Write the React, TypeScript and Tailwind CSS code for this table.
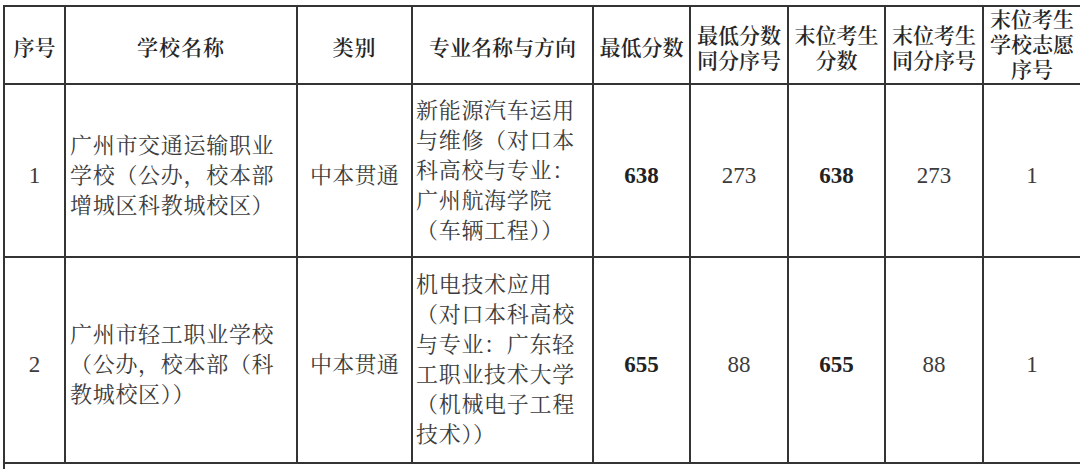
import React from "react";

const cellB = "border-2 border-[#343434]";

function Lines({ lines, className = "" }: { lines: string[]; className?: string }) {
  return (
    <div className={className}>
      {lines.map((l, i) => (
        <div key={i} className="whitespace-nowrap">
          {l}
        </div>
      ))}
    </div>
  );
}

type Row = {
  no: string;
  school: string[];
  kind: string;
  major: string[];
  minScore: string;
  minRank: string;
  lastScore: string;
  lastRank: string;
  wish: string;
  h: string;
};

const rows: Row[] = [
  {
    no: "1",
    school: ["广州市交通运输职业", "学校（公办，校本部", "增城区科教城校区）"],
    kind: "中本贯通",
    major: ["新能源汽车运用", "与维修（对口本", "科高校与专业：", "广州航海学院", "（车辆工程））"],
    minScore: "638",
    minRank: "273",
    lastScore: "638",
    lastRank: "273",
    wish: "1",
    h: "h-[173px]",
  },
  {
    no: "2",
    school: ["广州市轻工职业学校", "（公办，校本部（科", "教城校区））"],
    kind: "中本贯通",
    major: ["机电技术应用", "（对口本科高校", "与专业：广东轻", "工职业技术大学", "（机械电子工程", "技术））"],
    minScore: "655",
    minRank: "88",
    lastScore: "655",
    lastRank: "88",
    wish: "1",
    h: "h-[206px]",
  },
];

export default function App() {
  return (
    <div className="w-[1080px] h-[469px] overflow-hidden bg-white font-['Liberation_Serif','Noto_Serif_CJK_SC','Noto_Sans_CJK_SC',serif]">
      <table className="ml-[3px] mt-[5px] w-[1077px] table-fixed border-collapse">
        <colgroup>
          <col className="w-[61px]" />
          <col className="w-[232px]" />
          <col className="w-[115px]" />
          <col className="w-[181px]" />
          <col className="w-[97px]" />
          <col className="w-[98px]" />
          <col className="w-[97px]" />
          <col className="w-[98px]" />
          <col className="w-[98px]" />
        </colgroup>
        <thead>
          <tr className="h-[78px] text-[21px] leading-[25px] text-[#262626]">
            <th className={`${cellB} p-0 pt-[6px] text-center align-middle font-semibold`}>序号</th>
            <th className={`${cellB} p-0 pt-[6px] text-center align-middle font-semibold tracking-[1px]`}>学校名称</th>
            <th className={`${cellB} p-0 pt-[6px] text-center align-middle font-semibold tracking-[1px]`}>类别</th>
            <th className={`${cellB} p-0 pt-[6px] text-center align-middle font-semibold`}>专业名称与方向</th>
            <th className={`${cellB} p-0 pt-[6px] text-center align-middle font-semibold`}>最低分数</th>
            <th className={`${cellB} p-0 pt-[8px] text-center align-middle font-semibold`}>
              <Lines lines={["最低分数", "同分序号"]} />
            </th>
            <th className={`${cellB} p-0 pt-[8px] text-center align-middle font-semibold`}>
              <Lines lines={["末位考生", "分数"]} />
            </th>
            <th className={`${cellB} p-0 pt-[8px] text-center align-middle font-semibold`}>
              <Lines lines={["末位考生", "同分序号"]} />
            </th>
            <th className={`${cellB} p-0 text-center align-middle font-semibold`}>
              <Lines lines={["末位考生", "学校志愿", "序号"]} />
            </th>
          </tr>
        </thead>
        <tbody className="text-[22px] leading-[30px] text-[#3c3c3c]">
          {rows.map((r) => (
            <tr key={r.no} className={r.h}>
              <td className={`${cellB} p-0 pt-[10px] text-center align-middle text-[23px]`}>{r.no}</td>
              <td className={`${cellB} p-0 pt-[10px] pl-[4px] align-middle tracking-[0.7px]`}>
                <Lines lines={r.school} />
              </td>
              <td className={`${cellB} p-0 pt-[10px] text-center align-middle tracking-[0.3px]`}>{r.kind}</td>
              <td className={`${cellB} p-0 pl-[3px] align-middle tracking-[0.7px]`}>
                <Lines lines={r.major} />
              </td>
              <td className={`${cellB} p-0 pt-[10px] text-center align-middle text-[23px] font-bold text-[#222]`}>{r.minScore}</td>
              <td className={`${cellB} p-0 pt-[10px] text-center align-middle text-[23px]`}>{r.minRank}</td>
              <td className={`${cellB} p-0 pt-[10px] text-center align-middle text-[23px] font-bold text-[#222]`}>{r.lastScore}</td>
              <td className={`${cellB} p-0 pt-[10px] text-center align-middle text-[23px]`}>{r.lastRank}</td>
              <td className={`${cellB} p-0 pt-[10px] text-center align-middle text-[23px]`}>{r.wish}</td>
            </tr>
          ))}
          <tr className="h-[80px]">
            <td colSpan={9} className={`${cellB} p-0`}></td>
          </tr>
        </tbody>
      </table>
    </div>
  );
}
